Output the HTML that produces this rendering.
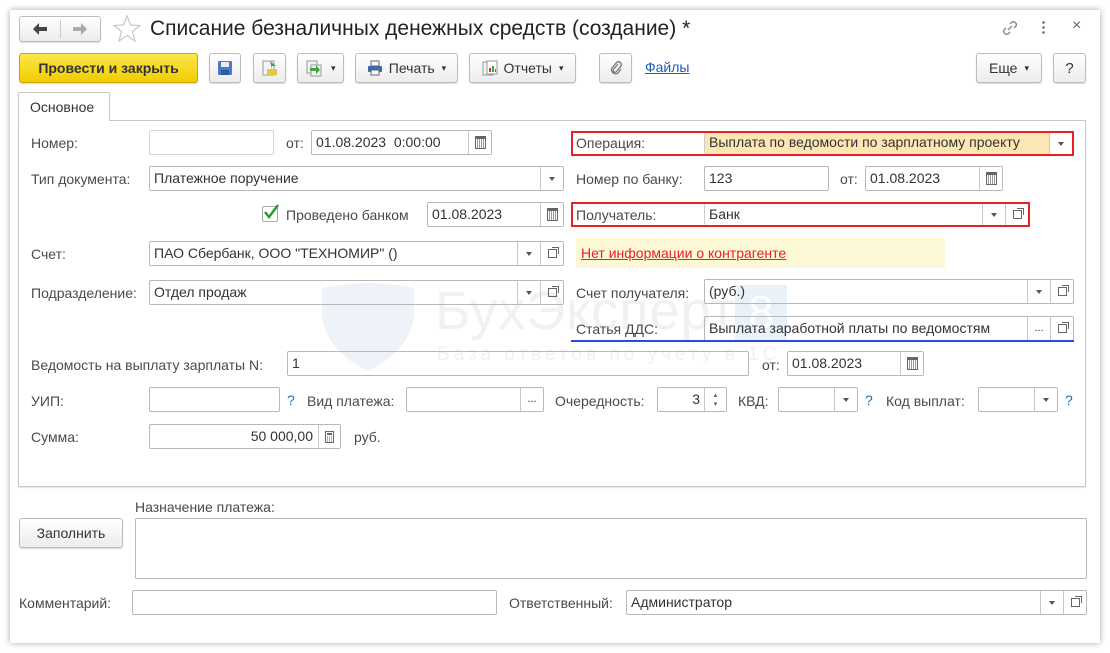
<!DOCTYPE html>
<html><head><meta charset="utf-8"><style>
*{box-sizing:border-box;margin:0;padding:0}
body{width:1110px;height:653px;background:#fff;font-family:"Liberation Sans",Arial,sans-serif;font-size:14px;color:#444;position:relative;overflow:hidden}
.a{position:absolute}
.win{left:10px;top:10px;width:1090px;height:633px;background:#fff;box-shadow:0 0 6px rgba(0,0,0,.35)}
.lbl{position:absolute;color:#4a4a4a;font-size:14px;line-height:16px;white-space:nowrap}
.in{position:absolute;border:1px solid #b8b8b8;border-radius:2px;background:#fff;height:25px;color:#333;font-size:14px;line-height:23px;padding-left:4px;white-space:nowrap;overflow:hidden}
.in.dis{border-color:#d6d6d6}
.bt{position:absolute;top:0;bottom:0;width:23px;border-left:1px solid #c8c8c8;display:flex;align-items:center;justify-content:center;background:#fff}
.dd::after{content:"";border-left:3px solid transparent;border-right:3px solid transparent;border-top:4px solid #555}
.ob::after{content:"";width:7px;height:7px;border:1px solid #666;box-shadow:2px -2px 0 -1px #fff,3px -3px 0 -1px #666}
.cal::after{content:"";width:9px;height:9px;border:1px solid #666;border-top:3px solid #666;background:repeating-linear-gradient(90deg,#fff 0 1px,#999 1px 2px)}
.btn{position:absolute;height:30px;border:1px solid #bdbdbd;border-radius:3px;background:linear-gradient(#fff,#ececec);box-shadow:0 1px 1px rgba(0,0,0,.15);font-size:14px;color:#333;display:flex;align-items:center;justify-content:center;white-space:nowrap}
.q{position:absolute;color:#1e6fb8;font-size:14px}
</style></head><body>
<div class="a win"></div>

<!-- header -->
<div class="btn" style="left:19px;top:16px;width:82px;height:26px;"></div>
<div class="a" style="left:60px;top:20px;width:1px;height:18px;background:#ccc"></div>
<svg class="a" style="left:32px;top:22px" width="16" height="14"><path d="M1 7 L7 1 L7 5 L15 5 L15 9 L7 9 L7 13Z" fill="#444"/></svg>
<svg class="a" style="left:72px;top:22px" width="16" height="14"><path d="M15 7 L9 1 L9 5 L1 5 L1 9 L9 9 L9 13Z" fill="#aaa"/></svg>
<svg class="a" style="left:113px;top:15px" width="28" height="27"><path d="M14 1 L17.5 10 L27 10.5 L19.5 16.5 L22 26 L14 20.5 L6 26 L8.5 16.5 L1 10.5 L10.5 10Z" fill="none" stroke="#c8c8c8" stroke-width="1.2"/></svg>
<div class="a" style="left:150px;top:16px;font-size:21px;color:#222;line-height:26px">Списание безналичных денежных средств (создание) *</div>
<svg class="a" style="left:1000px;top:18px" width="20" height="20" viewBox="0 0 20 20"><path d="M8 12 L12 8 M6 10 L4 12 a3 3 0 0 0 4 4 L10 14 M14 10 L16 8 a3 3 0 0 0 -4 -4 L10 6" fill="none" stroke="#888" stroke-width="1.4"/></svg>
<div class="a" style="left:1042px;top:20px;width:3px;height:14px;background:radial-gradient(circle,#777 1.2px,transparent 1.5px) 0 0/3px 5px"></div>
<div class="a" style="left:1072px;top:17px;font-size:16px;color:#666">×</div>

<!-- toolbar -->
<div class="btn" style="left:19px;top:53px;width:179px;background:linear-gradient(#fbe64a,#f0cd00);border-color:#c9a800;font-weight:bold;color:#333;font-size:14px">Провести и закрыть</div>
<div class="btn" style="left:209px;top:53px;width:32px"><svg width="16" height="16"><rect x="1" y="1" width="14" height="14" rx="1" fill="#4a7bbf"/><rect x="4" y="2" width="8" height="5" fill="#e8eef8"/><rect x="4" y="10" width="8" height="5" fill="#2c5a9a"/></svg></div>
<div class="btn" style="left:253px;top:53px;width:33px"><svg width="18" height="18"><rect x="2" y="2" width="11" height="14" fill="#f4f4f4" stroke="#999"/><rect x="6" y="10" width="10" height="6" fill="#e8c640"/><path d="M9 2 L15 7 L11 7 L11 10" fill="#3fa33f"/></svg></div>
<div class="btn" style="left:297px;top:53px;width:47px;justify-content:flex-start;padding-left:7px"><svg width="18" height="18"><rect x="2" y="2" width="10" height="12" fill="#f4f4f4" stroke="#999"/><rect x="6" y="6" width="10" height="11" fill="#f4f4f4" stroke="#999"/><path d="M5 9 L11 9 L11 6 L15 11 L11 15 L11 12 L5 12Z" fill="#43a843"/></svg><span style="font-size:9px;margin-left:8px">▾</span></div>
<div class="btn" style="left:355px;top:53px;width:103px"><svg width="16" height="16" style="margin-right:6px"><rect x="4" y="1" width="8" height="5" fill="#fff" stroke="#666"/><rect x="1" y="6" width="14" height="6" rx="1" fill="#3a6aa8"/><rect x="4" y="10" width="8" height="5" fill="#fff" stroke="#666"/></svg>Печать <span style="font-size:9px;margin-left:7px">▾</span></div>
<div class="btn" style="left:469px;top:53px;width:107px"><svg width="16" height="16" style="margin-right:6px"><rect x="1" y="2" width="10" height="13" fill="#f2f2f2" stroke="#999"/><rect x="5" y="1" width="10" height="13" fill="#fff" stroke="#999"/><rect x="7" y="8" width="2" height="4" fill="#d33"/><rect x="10" y="6" width="2" height="6" fill="#3a3"/><rect x="13" y="9" width="1" height="3" fill="#36c"/></svg>Отчеты <span style="font-size:9px;margin-left:7px">▾</span></div>
<div class="btn" style="left:599px;top:53px;width:33px"><svg width="14" height="16"><path d="M9 4 L4 10 a2 2 0 0 0 3 2 L12 6 a3 3 0 0 0 -4 -4 L3 8 a4 4 0 0 0 6 5 L12 9" fill="none" stroke="#777" stroke-width="1.3"/></svg></div>
<div class="a" style="left:645px;top:59px;color:#1a5eb0;text-decoration:underline;font-size:14px">Файлы</div>
<div class="btn" style="left:976px;top:53px;width:66px">Еще <span style="font-size:9px;margin-left:7px">▾</span></div>
<div class="btn" style="left:1053px;top:53px;width:33px;font-size:15px">?</div>

<!-- tab -->
<div class="a" style="left:18px;top:120px;width:1068px;height:367px;border:1px solid #c8c8c8;box-shadow:0 1px 1px rgba(0,0,0,.1)"></div>
<div class="a" style="left:18px;top:92px;width:92px;height:29px;border:1px solid #c8c8c8;border-bottom:none;background:#fff;border-radius:2px 2px 0 0;font-size:14px;color:#333;padding:6px 0 0 11px">Основное</div>

<!-- watermark -->
<svg class="a" style="left:322px;top:283px" width="92" height="88"><path d="M0 5 Q46 -5 92 5 L92 35 Q85 70 46 88 Q7 70 0 35Z" fill="#edf3f9"/></svg>
<div class="a" style="left:435px;top:280px;font-size:54px;color:#f1f1f1;letter-spacing:1px">БухЭксперт</div>
<div class="a" style="left:735px;top:285px;width:52px;height:55px;background:#e9f1f9;color:#fff;font-size:46px;text-align:center">8</div>
<div class="a" style="left:437px;top:344px;font-size:19px;color:#f1f1f1;letter-spacing:4px">База ответов по учету в 1С</div>

<!-- left column -->
<div class="lbl" style="left:31px;top:135px">Номер:</div>
<div class="in dis" style="left:149px;top:130px;width:125px"></div>
<div class="lbl" style="left:286px;top:135px">от:</div>
<div class="in" style="left:311px;top:130px;width:181px">01.08.2023&nbsp; 0:00:00<div class="bt cal" style="right:0"></div></div>

<div class="lbl" style="left:31px;top:171px">Тип документа:</div>
<div class="in" style="left:149px;top:166px;width:415px">Платежное поручение<div class="bt dd" style="right:0"></div></div>

<div class="a" style="left:262px;top:206px;width:16px;height:16px;border:1px solid #aaa;border-radius:2px;background:#fff"></div>
<svg class="a" style="left:262px;top:203px" width="18" height="18"><path d="M3 9 L7 14 L16 2" fill="none" stroke="#2a9a2a" stroke-width="2.4"/></svg>
<div class="lbl" style="left:286px;top:207px">Проведено банком</div>
<div class="in" style="left:427px;top:202px;width:137px">01.08.2023<div class="bt cal" style="right:0"></div></div>

<div class="lbl" style="left:31px;top:246px">Счет:</div>
<div class="in" style="left:149px;top:241px;width:415px">ПАО Сбербанк, ООО "ТЕХНОМИР" ()<div class="bt dd" style="right:23px"></div><div class="bt ob" style="right:0"></div></div>

<div class="lbl" style="left:31px;top:285px">Подразделение:</div>
<div class="in" style="left:149px;top:280px;width:415px;background:transparent">Отдел продаж<div class="bt dd" style="right:23px;background:transparent"></div><div class="bt ob" style="right:0;background:transparent"></div></div>

<!-- right column -->
<div class="a" style="left:571px;top:131px;width:503px;height:25px;border:2px solid #e8202a"></div>
<div class="lbl" style="left:576px;top:135px">Операция:</div>
<div class="in" style="left:704px;top:133px;width:368px;height:21px;background:#fbe6b4;border:none;border-left:1px solid #ccc;line-height:19px">Выплата по ведомости по зарплатному проекту<div class="bt dd" style="right:0"></div></div>

<div class="lbl" style="left:576px;top:171px">Номер по банку:</div>
<div class="in" style="left:704px;top:166px;width:125px">123</div>
<div class="lbl" style="left:840px;top:171px">от:</div>
<div class="in" style="left:865px;top:166px;width:138px">01.08.2023<div class="bt cal" style="right:0"></div></div>

<div class="a" style="left:571px;top:202px;width:459px;height:25px;border:2px solid #e8202a"></div>
<div class="lbl" style="left:576px;top:207px">Получатель:</div>
<div class="in" style="left:704px;top:204px;width:324px;height:21px;border:none;border-left:1px solid #ccc;line-height:21px">Банк<div class="bt dd" style="right:23px"></div><div class="bt ob" style="right:0"></div></div>

<div class="a" style="left:576px;top:238px;width:369px;height:30px;background:#fdf8d6"></div>
<div class="a" style="left:581px;top:245px;color:#e8202a;text-decoration:underline;font-size:14px">Нет информации о контрагенте</div>

<div class="lbl" style="left:576px;top:285px">Счет получателя:</div>
<div class="in" style="left:704px;top:279px;width:370px;background:transparent">(руб.)<div class="bt dd" style="right:23px;background:transparent"></div><div class="bt ob" style="right:0;background:transparent"></div></div>

<div class="lbl" style="left:576px;top:321px">Статья ДДС:</div>
<div class="in" style="left:704px;top:316px;width:370px;background:transparent">Выплата заработной платы по ведомостям<div class="bt" style="right:23px;font-size:11px;background:transparent">...</div><div class="bt ob" style="right:0;background:transparent"></div></div>
<div class="a" style="left:571px;top:340px;width:503px;height:2px;background:#2a4be0"></div>

<!-- lower -->
<div class="lbl" style="left:31px;top:357px">Ведомость на выплату зарплаты N:</div>
<div class="in" style="left:287px;top:351px;width:462px;background:transparent">1</div>
<div class="lbl" style="left:762px;top:357px">от:</div>
<div class="in" style="left:787px;top:351px;width:137px">01.08.2023<div class="bt cal" style="right:0"></div></div>

<div class="lbl" style="left:31px;top:393px">УИП:</div>
<div class="in" style="left:149px;top:387px;width:131px"></div>
<div class="q" style="left:287px;top:392px">?</div>
<div class="lbl" style="left:307px;top:393px">Вид платежа:</div>
<div class="in" style="left:406px;top:387px;width:138px"><div class="bt" style="right:0;font-size:11px">...</div></div>
<div class="lbl" style="left:555px;top:393px">Очередность:</div>
<div class="in" style="left:657px;top:387px;width:70px;text-align:right;padding-right:26px">3<div class="bt" style="right:0;width:22px;flex-direction:column;font-size:7px;line-height:9px;color:#555">▴<br>▾</div></div>
<div class="lbl" style="left:738px;top:393px">КВД:</div>
<div class="in" style="left:778px;top:387px;width:80px"><div class="bt dd" style="right:0"></div></div>
<div class="q" style="left:865px;top:392px">?</div>
<div class="lbl" style="left:886px;top:393px">Код выплат:</div>
<div class="in" style="left:978px;top:387px;width:80px"><div class="bt dd" style="right:0"></div></div>
<div class="q" style="left:1065px;top:392px">?</div>

<div class="lbl" style="left:31px;top:429px">Сумма:</div>
<div class="in" style="left:149px;top:424px;width:192px;text-align:right;padding-right:27px">50 000,00<div class="bt" style="right:0;width:22px"><svg width="9" height="12"><rect x=".5" y=".5" width="8" height="11" fill="#fff" stroke="#666"/><rect x="2" y="2" width="5" height="2" fill="#666"/><path d="M2 6h1M4 6h1M6 6h1M2 8h1M4 8h1M6 8h1M2 10h1M4 10h1M6 10h1" stroke="#666"/></svg></div></div>
<div class="lbl" style="left:354px;top:429px">руб.</div>

<!-- bottom -->
<div class="lbl" style="left:135px;top:499px">Назначение платежа:</div>
<div class="btn" style="left:19px;top:518px;width:104px;height:30px">Заполнить</div>
<div class="in" style="left:135px;top:518px;width:952px;height:61px"></div>

<div class="lbl" style="left:19px;top:595px">Комментарий:</div>
<div class="in" style="left:132px;top:590px;width:365px"></div>
<div class="lbl" style="left:509px;top:595px">Ответственный:</div>
<div class="in" style="left:626px;top:590px;width:461px">Администратор<div class="bt dd" style="right:23px"></div><div class="bt ob" style="right:0"></div></div>
</body></html>
